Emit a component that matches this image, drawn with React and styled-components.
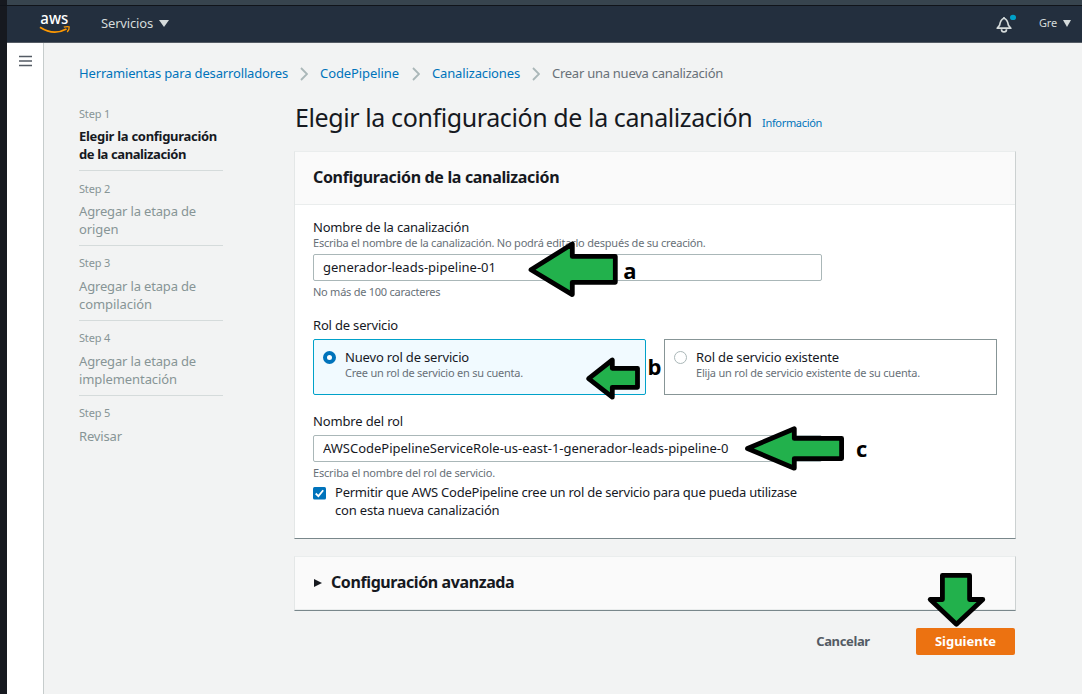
import React from "react";
import styled, { createGlobalStyle } from "styled-components";

const GlobalStyle = createGlobalStyle`
  * { box-sizing: border-box; }
  body {
    margin: 0;
    background: #f2f3f3;
    color: #16191f;
    font: 400 13px/18px "Noto Sans", "Open Sans", sans-serif;
    overflow: hidden;
  }
`;

const Screen = styled.div`
  position: relative;
  width: 1082px;
  height: 694px;
  border-left: 7px solid #16191f;
  display: flex;
  flex-direction: column;
`;

const BrowserEdge = styled.div`
  height: 6px;
  margin-left: -7px;
  background: linear-gradient(90deg, #16191f 7px, #37444e 7px);
  border-bottom: 1px solid #10141a;
`;

const TopBar = styled.header`
  height: 37px;
  background: #232f3e;
  border-bottom: 1px solid #545b64;
  display: flex;
  align-items: flex-start;
  color: #d5dbdb;
`;

const Logo = styled.svg`
  width: 32px;
  height: 32px;
  margin-left: 32px;
  overflow: visible;
`;

const NavItem = styled.div`
  display: flex;
  align-items: center;
  gap: ${(p) => p.$gap}px;
  margin: ${(p) => p.$margin};
  font-size: ${(p) => p.$size}px;
  letter-spacing: -0.16px;
`;

const Caret = styled.span`
  border: solid transparent;
  border-width: ${(p) => p.$h}px ${(p) => p.$w / 2}px 0;
  border-top-color: #d5dbdb;
  margin-top: 1px;
`;

const Bell = styled.svg`
  width: 24px;
  height: 22px;
  margin: 8px 0 0 auto;
`;

const Body = styled.div`
  flex: 1;
  display: flex;
`;

const Rail = styled.aside`
  width: 37px;
  background: #fff;
  border-right: 1px solid #c6cccc;
  padding: 12px 0 0 12px;
`;

const Main = styled.main`
  padding: 21px 0 0 35px;
  width: 972px;
`;

const Text = styled.span`
  letter-spacing: ${(p) => p.$ls || 0}px;
  white-space: nowrap;
`;

const Crumbs = styled.nav`
  display: flex;
  height: 18px;
  color: #687078;
`;

const Crumb = styled.a`
  width: ${(p) => p.$w}px;
  color: #0073bb;
  letter-spacing: ${(p) => p.$ls}px;
  white-space: nowrap;
`;

const Chevron = styled.svg`
  width: 8px;
  height: 14px;
  margin: 3px 12.5px 0 11.5px;
`;

const Columns = styled.div`
  display: flex;
  gap: 71px;
`;

const Steps = styled.ol`
  list-style: none;
  flex: 0 0 144px;
  margin: 23.8px 0 0;
  padding: 0;
`;

const Step = styled.li`
  color: ${(p) => (p.$active ? "#16191f" : "#879596")};
  font-weight: ${(p) => (p.$active ? 700 : 400)};
  padding-bottom: 7.1px;
  margin-bottom: 9.1px;
  border-bottom: 1px solid #d5dbdb;
  &:last-child { border: 0; }
`;

const StepNumber = styled.div`
  font: 400 11px/16px "Noto Sans", sans-serif;
  letter-spacing: -0.18px;
  color: #879596;
  margin-bottom: 5.6px;
`;

const StepLine = styled.div`
  letter-spacing: ${(p) => p.$ls}px;
  white-space: nowrap;
`;

const Content = styled.section`
  flex: 0 0 722px;
  padding-top: 18px;
`;

const TitleRow = styled.div`
  display: flex;
  align-items: baseline;
  height: 34px;
  margin: 0 0 17px 1px;
`;

const Title = styled.h1`
  margin: 0;
  width: 467px;
  font-size: 25px;
  line-height: 34px;
  font-weight: 400;
  letter-spacing: -0.4px;
  white-space: nowrap;
`;

const InfoLink = styled.a`
  font-size: 11px;
  line-height: 16px;
  letter-spacing: -0.32px;
  color: #0073bb;
`;

const Panel = styled.section`
  background: #fff;
  border: 1px solid;
  border-color: #eaeded #ccd1d1 #79878b #e4e7e7;
  margin-bottom: 17px;
`;

const PanelHead = styled.div`
  display: flex;
  height: 53px;
  padding: 14px 18px 0;
  background: #fafafa;
  border-bottom: 1px solid #eaeded;
`;

const Heading = styled.h2`
  margin: 0;
  font-size: 16px;
  line-height: 22px;
  font-weight: 700;
  letter-spacing: ${(p) => p.$ls}px;
`;

const Disclosure = styled.span`
  width: 0;
  height: 0;
  border: solid transparent;
  border-width: 4.5px 0 4.5px 8px;
  border-left-color: #16191f;
  margin: 8px 9px 0 1px;
`;

const PanelBody = styled.div`
  padding: 13px 18px 0;
  height: 333px;
`;

const Field = styled.div`
  display: flex;
  flex-direction: column;
  margin-bottom: ${(p) => p.$after}px;
`;

const Hint = styled.div`
  font-size: 11px;
  line-height: 16px;
  color: #687078;
  letter-spacing: ${(p) => p.$ls}px;
  margin-top: ${(p) => p.$top || 0}px;
  white-space: nowrap;
`;

const Input = styled.input`
  width: 509px;
  height: 27px;
  margin-top: ${(p) => p.$top}px;
  padding: 0 9px 2px;
  border: 1px solid #aab7b8;
  border-radius: 2px;
  background: #fff;
  color: #16191f;
  font: 400 13px/18px "Noto Sans", sans-serif;
  letter-spacing: ${(p) => p.$ls}px;
`;

const Tiles = styled.div`
  display: flex;
  gap: 18px;
  margin-top: 5px;
`;

const Tile = styled.label`
  display: flex;
  width: 333px;
  height: 56px;
  padding: 8px 9px;
  border: 1px solid ${(p) => (p.$on ? "#00a1c9" : "#879596")};
  border-radius: ${(p) => (p.$on ? 2 : 0)}px;
  background: ${(p) => (p.$on ? "#f1faff" : "#fff")};
`;

const Radio = styled.span`
  width: 13px;
  height: 13px;
  margin: 3px 9px 0 0;
  border-radius: 50%;
  background: #fff;
  border: ${(p) => (p.$on ? "4px solid #0073bb" : "1px solid #aab7b8")};
`;

const CheckRow = styled.label`
  display: flex;
  gap: 9px;
  margin-top: 2px;
`;

const CheckBox = styled.svg`
  width: 13px;
  height: 13px;
  margin-top: 4px;
`;

const Actions = styled.div`
  display: flex;
  justify-content: flex-end;
`;

const Button = styled.button`
  height: 27px;
  width: ${(p) => p.$w}px;
  padding: 0 0 2px;
  margin-right: ${(p) => p.$after}px;
  border: 0;
  border-radius: 2px;
  background: ${(p) => (p.$primary ? "#ec7211" : "transparent")};
  color: ${(p) => (p.$primary ? "#fff" : "#545b64")};
  font: 700 13px/18px "Noto Sans", sans-serif;
  letter-spacing: ${(p) => p.$ls}px;
`;

const Annotations = styled.svg`
  position: absolute;
  left: -7px;
  top: 0;
  pointer-events: none;
  font: 700 22px "Open Sans", sans-serif;
`;

const steps = [
  { lines: [["Elegir la configuración", -0.287], ["de la canalización", -0.403]], active: true },
  { lines: [["Agregar la etapa de", -0.164], ["origen", -0.1]] },
  { lines: [["Agregar la etapa de", -0.164], ["compilación", -0.068]] },
  { lines: [["Agregar la etapa de", -0.164], ["implementación", -0.085]] },
  { lines: [["Revisar", -0.144]] },
];

const arrows = [
  "531,269.7 572.3,244 572.3,256.4 615.3,256.4 615.3,282.3 572.3,282.3 572.3,294.6",
  "588.6,378.7 612.3,360 612.3,368.3 637.5,368.3 637.5,387.3 612.3,387.3 612.3,397.2",
  "747.5,448.5 794.3,428.8 794.3,438.4 841.6,438.4 841.6,458.6 794.3,458.6 794.3,468.2",
  "942.4,575.4 969.6,575.4 969.6,599.5 982.8,599.5 956.4,624.2 930.2,599.5 942.4,599.5",
];

const Separator = () => (
  <Chevron viewBox="0 0 8 14">
    <path d="M1 1l6 6-6 6" fill="none" stroke="#aab7b8" strokeWidth="1.8" />
  </Chevron>
);

export default function App() {
  return (
    <>
      <GlobalStyle />
      <Screen>
        <BrowserEdge />
        <TopBar>
          <Logo viewBox="0 -8 32 32">
            <text x="1.3" y="10.2" fill="#fff" fontSize="15.5" fontWeight="500" textLength="28" lengthAdjust="spacingAndGlyphs" fontFamily="Noto Sans, sans-serif">aws</text>
            <path d="M1 13.3Q14.5 22 27.5 15" fill="none" stroke="#f90" strokeWidth="1.8" />
            <path d="M24.8 13.2Q28 12.2 30.2 12.9Q30.5 15.5 28.2 18" fill="none" stroke="#f90" strokeWidth="1.3" />
          </Logo>
          <NavItem $gap={6} $size={13} $margin="8px 0 0 30px">
            Servicios <Caret $w={10} $h={7} />
          </NavItem>
          <Bell viewBox="0 0 24 22">
            <path d="M2.2 14.2H15.8L13.4 11.2C12.7 7 11.8 5 9 4.2C6.2 5 5.3 7 4.6 11.2Z" fill="none" stroke="#d5dbdb" strokeWidth="1.7" strokeLinejoin="round" />
            <path d="M6.5 15.2a2.5 2.7 0 0 0 5 0" fill="none" stroke="#d5dbdb" strokeWidth="1.7" />
            <circle cx="9" cy="4" r="1" fill="#d5dbdb" />
            <ellipse cx="18" cy="3.4" rx="3" ry="2.6" fill="#00a1c9" />
          </Bell>
          <NavItem $gap={6} $size={11} $margin="8px 11px 0 20px">
            Gre <Caret $w={9} $h={7} />
          </NavItem>
        </TopBar>
        <Body>
          <Rail>
            <svg width="13" height="13" viewBox="0 0 13 13" display="block">
              <path d="M0 1.6h13M0 6h13M0 10.5h13" stroke="#545b64" strokeWidth="1.5" />
            </svg>
          </Rail>
          <Main>
            <Crumbs>
              <Crumb $w={209} $ls={-0.151}>Herramientas para desarrolladores</Crumb>
              <Separator />
              <Crumb $w={80} $ls={-0.086}>CodePipeline</Crumb>
              <Separator />
              <Crumb $w={88} $ls={-0.143}>Canalizaciones</Crumb>
              <Separator />
              <Text $ls={-0.261}>Crear una nueva canalización</Text>
            </Crumbs>
            <Columns>
              <Steps>
                {steps.map((step, i) => (
                  <Step key={i} $active={step.active}>
                    <StepNumber>Step {i + 1}</StepNumber>
                    {step.lines.map(([line, ls]) => (
                      <StepLine key={line} $ls={ls}>{line}</StepLine>
                    ))}
                  </Step>
                ))}
              </Steps>
              <Content>
                <TitleRow>
                  <Title>Elegir la configuración de la canalización</Title>
                  <InfoLink>Información</InfoLink>
                </TitleRow>
                <Panel>
                  <PanelHead>
                    <Heading $ls={-0.33}>Configuración de la canalización</Heading>
                  </PanelHead>
                  <PanelBody>
                    <Field $after={16}>
                      <Text $ls={-0.197}>Nombre de la canalización</Text>
                      <Hint $top={-1} $ls={-0.218}>
                        Escriba el nombre de la canalización. No podrá editarlo después de su creación.
                      </Hint>
                      <Input $top={3} $ls={0.011} readOnly value="generador-leads-pipeline-01" />
                      <Hint $top={3} $ls={-0.25}>No más de 100 caracteres</Hint>
                    </Field>
                    <Field $after={17}>
                      <Text $ls={-0.182}>Rol de servicio</Text>
                      <Tiles>
                        <Tile $on>
                          <Radio $on />
                          <div>
                            <Text $ls={-0.171}>Nuevo rol de servicio</Text>
                            <Hint $top={-1} $ls={-0.231}>Cree un rol de servicio en su cuenta.</Hint>
                          </div>
                        </Tile>
                        <Tile>
                          <Radio />
                          <div>
                            <Text $ls={-0.149}>Rol de servicio existente</Text>
                            <Hint $top={-1} $ls={-0.199}>Elija un rol de servicio existente de su cuenta.</Hint>
                          </div>
                        </Tile>
                      </Tiles>
                    </Field>
                    <Field $after={0}>
                      <Text $ls={-0.15}>Nombre del rol</Text>
                      <Input $top={5} $ls={-0.015} readOnly value="AWSCodePipelineServiceRole-us-east-1-generador-leads-pipeline-0" />
                      <Hint $top={3} $ls={-0.183}>Escriba el nombre del rol de servicio.</Hint>
                    </Field>
                    <CheckRow>
                      <CheckBox viewBox="0 0 13 13">
                        <rect width="13" height="12.5" rx="1.5" fill="#0073bb" />
                        <path d="M2.7 6.5l2.7 2.6L10.2 3.3" fill="none" stroke="#fff" strokeWidth="1.8" />
                      </CheckBox>
                      <div>
                        <Text as="div" $ls={-0.231}>
                          Permitir que AWS CodePipeline cree un rol de servicio para que pueda utilizase
                        </Text>
                        <Text as="div" $ls={-0.18}>con esta nueva canalización</Text>
                      </div>
                    </CheckRow>
                  </PanelBody>
                </Panel>
                <Panel>
                  <PanelHead>
                    <Disclosure />
                    <Heading $ls={-0.4}>Configuración avanzada</Heading>
                  </PanelHead>
                </Panel>
                <Actions>
                  <Button $w={90} $after={28} $ls={-0.38}>Cancelar</Button>
                  <Button $w={99} $after={1} $ls={-0.02} $primary>Siguiente</Button>
                </Actions>
              </Content>
            </Columns>
          </Main>
        </Body>
        <Annotations width="1082" height="694">
          {arrows.map((points) => (
            <polygon key={points} points={points} fill="#22b14c" stroke="#000" strokeWidth="4.8" strokeLinejoin="round" />
          ))}
          <text x="623.3" y="279">a</text>
          <text x="647.5" y="375">b</text>
          <text x="856" y="457">c</text>
        </Annotations>
      </Screen>
    </>
  );
}
